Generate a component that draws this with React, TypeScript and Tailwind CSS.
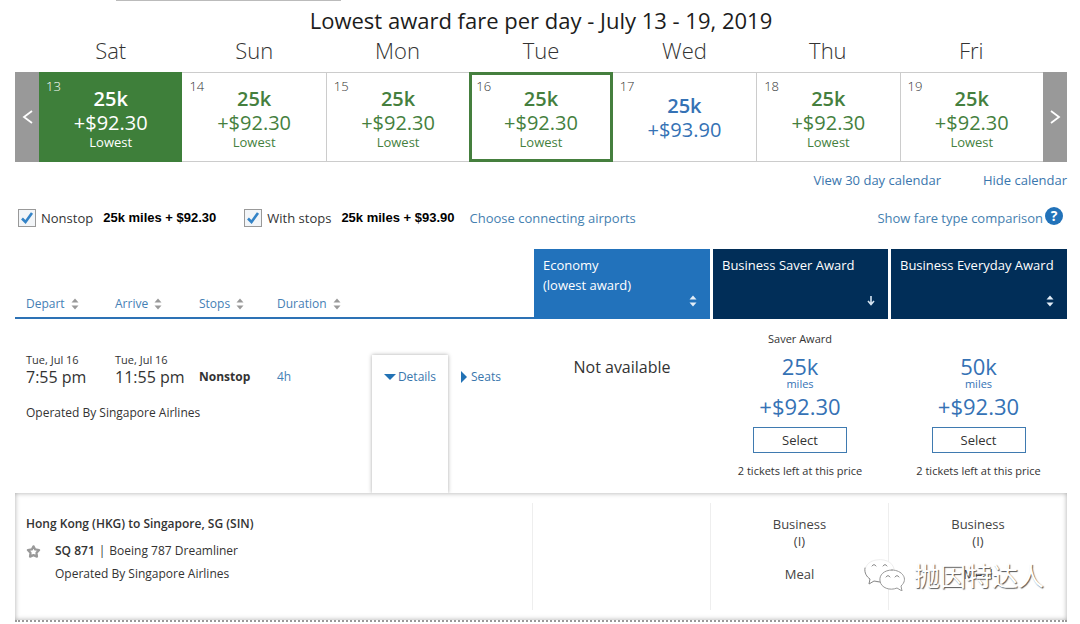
const days = [
  { name: "Sat", date: 13, miles: "25k", cash: "+$92.30", lowest: true, cell: "bg-[#3e7f3a] text-white" },
  { name: "Sun", date: 14, miles: "25k", cash: "+$92.30", lowest: true, cell: "text-[#457f3e]" },
  { name: "Mon", date: 15, miles: "25k", cash: "+$92.30", lowest: true, cell: "border-l border-[#ccc] text-[#457f3e]" },
  { name: "Tue", date: 16, miles: "25k", cash: "+$92.30", lowest: true, cell: "outline-3 -outline-offset-3 outline-[#457f3e] text-[#457f3e]" },
  { name: "Wed", date: 17, miles: "25k", cash: "+$93.90", lowest: false, cell: "text-[#3572b5]" },
  { name: "Thu", date: 18, miles: "25k", cash: "+$92.30", lowest: true, cell: "border-l border-[#ccc] text-[#457f3e]" },
  { name: "Fri", date: 19, miles: "25k", cash: "+$92.30", lowest: true, cell: "border-l border-[#ccc] text-[#457f3e]" },
];

const filters = [
  { id: "nonstop", label: "Nonstop", price: "25k miles + $92.30" },
  { id: "with-stops", label: "With stops", price: "25k miles + $93.90" },
];

function WeekButton({ label, path }: { label: string; path: string }) {
  return (
    <button type="button" aria-label={label} className="flex w-6 items-center justify-center bg-[#999] text-white">
      <svg viewBox="0 0 11 14" className="h-3.5 w-[11px]" fill="none" stroke="currentColor" strokeWidth="1.8" aria-hidden="true">
        <path d={path} />
      </svg>
    </button>
  );
}

function SortIcon({ className }: { className: string }) {
  return (
    <svg viewBox="0 0 8 12" className={`h-3 w-2 ${className}`} fill="currentColor" aria-hidden="true">
      <path d="M4 .5 7.500 4.500h-7zM4 11.500.5 7.500h7z" />
    </svg>
  );
}

function SortHeader({ label, first }: { label: string; first?: boolean }) {
  return (
    <th scope="col" className={`border-b-2 border-[#2d72b5] pb-[3px] text-left align-bottom font-normal ${first ? "pl-[11px]" : ""}`}>
      <button type="button" className="flex items-center gap-1.5 text-[12px] leading-5 text-[#4580b5]">
        {label}
        <SortIcon className="text-[#999]" />
      </button>
    </th>
  );
}

function FareHeader({ label, note, tone, down }: { label: string; note?: string; tone: string; down?: boolean }) {
  return (
    <th scope="col" className={`pt-1.5 pb-3 pl-[9px] text-left align-top text-[13px] leading-5 font-normal whitespace-nowrap text-white ${tone}`}>
      <button type="button" className="flex h-[52px] w-full flex-col justify-between text-left">
        <span>
          {label}
          {note && <span className="block">{note}</span>}
        </span>
        <span className="mr-[13px] self-end">
          {down ? (
            <svg viewBox="0 0 8 12" className="h-3 w-2 text-[#d5e3f0]" fill="none" stroke="currentColor" strokeWidth="1.6" aria-hidden="true">
              <path d="M4 1v8M1 6l3 3.500L7 6" />
            </svg>
          ) : (
            <SortIcon className="text-[#e4eef7]" />
          )}
        </span>
      </button>
    </th>
  );
}

function FareCell({ note, miles }: { note?: string; miles: string }) {
  return (
    <td rowSpan={2} className="pt-2.5 pl-0.5 text-center align-top">
      <div className="h-5 text-[11px] leading-5 text-[#333]">{note}</div>
      <div className="mt-[5px] text-[22px] leading-6 text-[#3572b5]">{miles}</div>
      <div className="text-[11px] leading-3 text-[#3572b5]">miles</div>
      <div className="text-[22px] leading-8 text-[#3572b5]">+$92.30</div>
      <button type="button" className="mt-[5px] h-[26px] w-[94px] border border-[#3f7ab0] text-[13px] leading-5 text-[#333]">
        Select
      </button>
      <div className="mt-2 text-[11px] leading-5 text-[#333]">2 tickets left at this price</div>
    </td>
  );
}

function CabinInfo() {
  return (
    <div className="border-l border-[#eee] pt-[13px] text-center text-[13px] leading-[17px] text-[#444]">
      <div>Business</div>
      <div>(I)</div>
      <div className="mt-4">Meal</div>
    </div>
  );
}

function Watermark() {
  return (
    <div className="absolute right-[23px] bottom-[29px] flex items-center gap-2 text-white">
      <svg viewBox="0 0 42 32" className="h-8 w-[42px]" fill="#fff" strokeWidth="1" strokeLinecap="round" aria-hidden="true">
        <path d="M16 23c-2 0-4 0-6-1l-5 3 1-5C-2 15 0 3 12 1s19 5 18 11" stroke="#eee" />
        <path d="M1 9c-1 5 2 9 5 11l-1 5 5-3 6 1" stroke="#888" />
        <path d="M28 11c-8 0-13 5-12 11 1 7 10 10 17 7l5 3-1-5c8-7 1-16-9-16z" stroke="#999" />
        <path d="M8 7q2-3 4 0M19 7q2-3 4 0M22 18q2-3 4 0M31 18q2-3 4 0" fill="none" stroke="#888" />
      </svg>
      <span className="font-['Noto_Sans_CJK_SC',sans-serif] text-[26px] leading-8 [text-shadow:1px_1px_1px_#555]">抛因特达人</span>
    </div>
  );
}

export default function App() {
  return (
    <main className="bg-white pr-[13px] pl-[15px] font-['Open_Sans',sans-serif] text-[#333]">
      <div className="ml-[101px] h-px w-[225px] bg-[#bbb]" />

      <section>
        <h1 className="mt-1.5 text-center text-[22px] leading-[26px] text-[#1c1c1c]">
          Lowest award fare per day - July 13 - 19, 2019
        </h1>
        <div className="mt-1 mb-[9px] grid grid-cols-7 px-6">
          {days.map((day) => (
            <div key={day.name} className="text-center text-[22px] leading-[26px] font-light text-[#333]">{day.name}</div>
          ))}
        </div>
        <div className="flex h-[90px]">
          <WeekButton label="Previous week" path="M10 1 2 7l8 6" />
          <div className="grid flex-1 grid-cols-7 border-y border-[#ccc]">
            {days.map((day) => (
              <button key={day.date} type="button" className={`relative -my-px flex flex-col items-center justify-center pt-0.5 ${day.cell}`}>
                <span className={`absolute top-1 left-[7px] text-[13px] leading-5 font-light ${day.date === 13 ? "text-white" : "text-[#333]"}`}>{day.date}</span>
                <span className="text-[20px] leading-6 font-semibold">{day.miles}</span>
                <span className="text-[20px] leading-6">{day.cash}</span>
                {day.lowest && <span className="text-[13px] leading-[14px]">Lowest</span>}
              </button>
            ))}
          </div>
          <WeekButton label="Next week" path="m1 1 8 6-8 6" />
        </div>
        <div className="mt-2 flex justify-end gap-[42px] text-[13px] leading-5 text-[#3a76ad]">
          <a href="#month">View 30 day calendar</a>
          <a href="#hide">Hide calendar</a>
        </div>
      </section>

      <div className="mt-[18px] flex items-center pl-[3px] text-[13px] leading-5">
        {filters.map((filter) => (
          <div key={filter.id} className="mr-7 flex items-center last-of-type:mr-[3px]">
            <span className="relative mr-[5px] size-[18px]">
              <input
                id={filter.id}
                type="checkbox"
                defaultChecked
                className="peer block size-[18px] appearance-none border border-[#999] bg-[#f2f5f8]"
              />
              <svg viewBox="0 0 18 18" className="pointer-events-none absolute inset-0 hidden peer-checked:block" fill="none" stroke="#3383c7" strokeWidth="2.6" aria-hidden="true">
                <path d="M4 9.500 7.500 13 14 4" />
              </svg>
            </span>
            <label htmlFor={filter.id}>{filter.label}</label>
            <b className="ml-2.5 font-['Liberation_Sans',sans-serif] text-[13px] text-black">{filter.price}</b>
          </div>
        ))}
        <a href="#airports" className="ml-3 text-[#4580b0]">Choose connecting airports</a>
        <a href="#fare-types" className="mr-1 ml-auto flex items-center gap-0.5 text-[#4580b0]">
          Show fare type comparison
          <span className="-mt-1 flex size-[18px] items-center justify-center rounded-full bg-[#2272b9] text-[14px] font-bold text-white">?</span>
        </a>
      </div>

      <table className="mt-[21px] w-full table-fixed border-separate border-spacing-0">
        <colgroup>
          <col className="w-[100px]" />
          <col className="w-[84px]" />
          <col className="w-[78px]" />
          <col className="w-[95px]" />
          <col className="w-[76px]" />
          <col />
          <col className="w-[176px]" />
          <col className="w-[178px]" />
          <col className="w-[179px]" />
        </colgroup>
        <thead>
          <tr>
            <SortHeader label="Depart" first />
            <SortHeader label="Arrive" />
            <SortHeader label="Stops" />
            <SortHeader label="Duration" />
            <td colSpan={2} className="border-b-2 border-[#2d72b5]" />
            <FareHeader label="Economy" note="(lowest award)" tone="bg-[#2272bb]" />
            <FareHeader label="Business Saver Award" tone="border-l-3 border-white bg-[#012e58]" down />
            <FareHeader label="Business Everyday Award" tone="border-l-3 border-white bg-[#012e58]" />
          </tr>
        </thead>
        <tbody>
          <tr>
            <td className="h-[67px] pl-[11px] align-bottom">
              <div className="text-[11px] leading-4">Tue, Jul 16</div>
              <div className="text-[16px] leading-[18px]">7:55 pm</div>
            </td>
            <td className="align-bottom whitespace-nowrap">
              <div className="text-[11px] leading-4">Tue, Jul 16</div>
              <div className="text-[16px] leading-[18px]">11:55 pm</div>
            </td>
            <td className="align-bottom text-[12px] leading-[18px] font-bold">Nonstop</td>
            <td className="align-bottom text-[12px] leading-[18px] text-[#4580b5]">4h</td>
            <td rowSpan={2} className="pt-9 align-top">
              <div className="h-[138px] bg-white pt-3 shadow-[0_0_4px_#aaa] [clip-path:inset(-6px_-6px_0)]">
                <button type="button" aria-expanded="true" className="mx-auto flex items-center text-[12px] leading-5 text-[#3a76ad]">
                  <svg viewBox="0 0 12 6" className="mr-0.5 h-1.5 w-3" fill="#2272b5" aria-hidden="true">
                    <path d="M0 0h12L6 6z" />
                  </svg>
                  Details
                </button>
              </div>
            </td>
            <td rowSpan={2} className="pt-12 pl-[13px] align-top">
              <button type="button" aria-expanded="false" className="flex items-center gap-1 text-[12px] leading-5 text-[#3a76ad]">
                <svg viewBox="0 0 6 12" className="h-3 w-1.5" fill="#2272b5" aria-hidden="true">
                  <path d="M0 0v12l6-6z" />
                </svg>
                Seats
              </button>
            </td>
            <td rowSpan={2} className="pt-9 text-center align-top text-[16px] leading-6">Not available</td>
            <FareCell note="Saver Award" miles="25k" />
            <FareCell miles="50k" />
          </tr>
          <tr>
            <td colSpan={4} className="pt-[17px] pl-[11px] align-top text-[12px] leading-5">Operated By Singapore Airlines</td>
          </tr>
          <tr>
            <td colSpan={9}>
              <div className="relative grid grid-cols-[1fr_178px_178px_179px] border-b-2 border-dotted border-[#999] py-2.5 shadow-[inset_0_0_5px_#aaa]">
                <div className="h-[107px] pt-[11px] pl-[11px] text-[12px] leading-5">
                  <h2 className="font-semibold">Hong Kong (HKG) to Singapore, SG (SIN)</h2>
                  <div className="mt-[7px] flex items-center">
                    <svg viewBox="0 0 16 16" className="mr-3.5 size-[15px]" fill="none" stroke="#999" strokeWidth="2.4" strokeLinejoin="round" aria-hidden="true">
                      <path d="M8 2.500 9.800 5.800 14 6.400 11.200 9.400 11.700 13.500 8 11.900 4.300 13.500 4.800 9.400 2 6.400 6.200 5.800z" />
                    </svg>
                    <b className="font-semibold">SQ 871</b>
                    <span className="mx-1">|</span>
                    Boeing 787 Dreamliner
                  </div>
                  <div className="mt-[3px] pl-[29px]">Operated By Singapore Airlines</div>
                </div>
                <div className="border-l border-[#eee]" />
                <CabinInfo />
                <CabinInfo />
                <Watermark />
              </div>
            </td>
          </tr>
        </tbody>
      </table>
    </main>
  );
}
